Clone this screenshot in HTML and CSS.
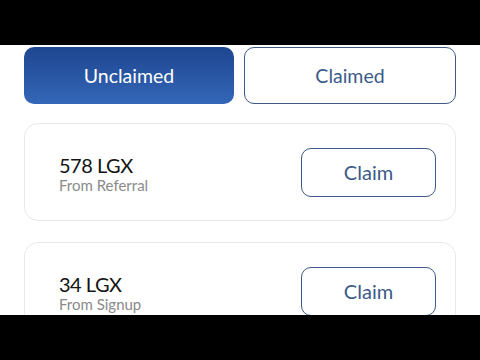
FILE: index.html
```html
<!DOCTYPE html>
<html>
<head>
<meta charset="utf-8">
<link rel="stylesheet" href="styles.css">
</head>
<body>
<div class="frame">
  <div class="bar"></div>
  <main class="screen">
    <div class="tabs">
      <button class="tab tab-active">Unclaimed</button>
      <button class="tab">Claimed</button>
    </div>
    <div class="list">
      <div class="card">
        <div class="info">
          <div class="amount">578 LGX</div>
          <div class="source">From Referral</div>
        </div>
        <button class="claim">Claim</button>
      </div>
      <div class="card">
        <div class="info">
          <div class="amount">34 LGX</div>
          <div class="source">From Signup</div>
        </div>
        <button class="claim">Claim</button>
      </div>
    </div>
  </main>
  <div class="bar"></div>
</div>
</body>
</html>
```
FILE: styles.css
```css
html, body {
  margin: 0;
  padding: 0;
  background: #000;
}
.frame {
  width: 480px;
  height: 360px;
  display: flex;
  flex-direction: column;
  font-family: Lato, "Open Sans", sans-serif;
}
.bar {
  height: 45px;
  flex: none;
  background: #000;
}
.screen {
  height: 270px;
  flex: none;
  overflow: hidden;
  background: #fff;
  padding: 2px 24px 0 24px;
  box-sizing: border-box;
}
.tabs {
  display: grid;
  grid-template-columns: 210px 212px;
  gap: 10px;
}
.tab {
  height: 57px;
  border-radius: 10px;
  border: 1.5px solid #3c5a88;
  background: #fff;
  color: #3c5a88;
  font-family: Lato, sans-serif;
  font-size: 19.5px;
  padding: 0;
}
.tab-active {
  border: none;
  color: #fff;
  background: linear-gradient(180deg, #1e4690 0%, #2b59a7 60%, #3467b9 100%);
}
.list {
  display: flex;
  flex-direction: column;
  gap: 21px;
  margin-top: 19px;
}
.card {
  height: 98px;
  box-sizing: border-box;
  border: 1px solid #e6e8ea;
  border-radius: 14px;
  display: flex;
  align-items: center;
  justify-content: space-between;
  padding: 0 19px 0 34px;
  flex: none;
}
.info {
  padding-top: 3px;
}
.amount {
  font-size: 20px;
  letter-spacing: -0.5px;
  color: #141414;
  line-height: 22px;
}
.source {
  font-size: 15px;
  color: #8a8a8a;
  line-height: 18px;
}
.claim {
  width: 135px;
  height: 49px;
  border: 1.5px solid #3c5a88;
  border-radius: 10px;
  background: #fff;
  color: #3c5a88;
  font-family: Lato, sans-serif;
  font-size: 20px;
  padding: 0 0 1px 0;
}
```
